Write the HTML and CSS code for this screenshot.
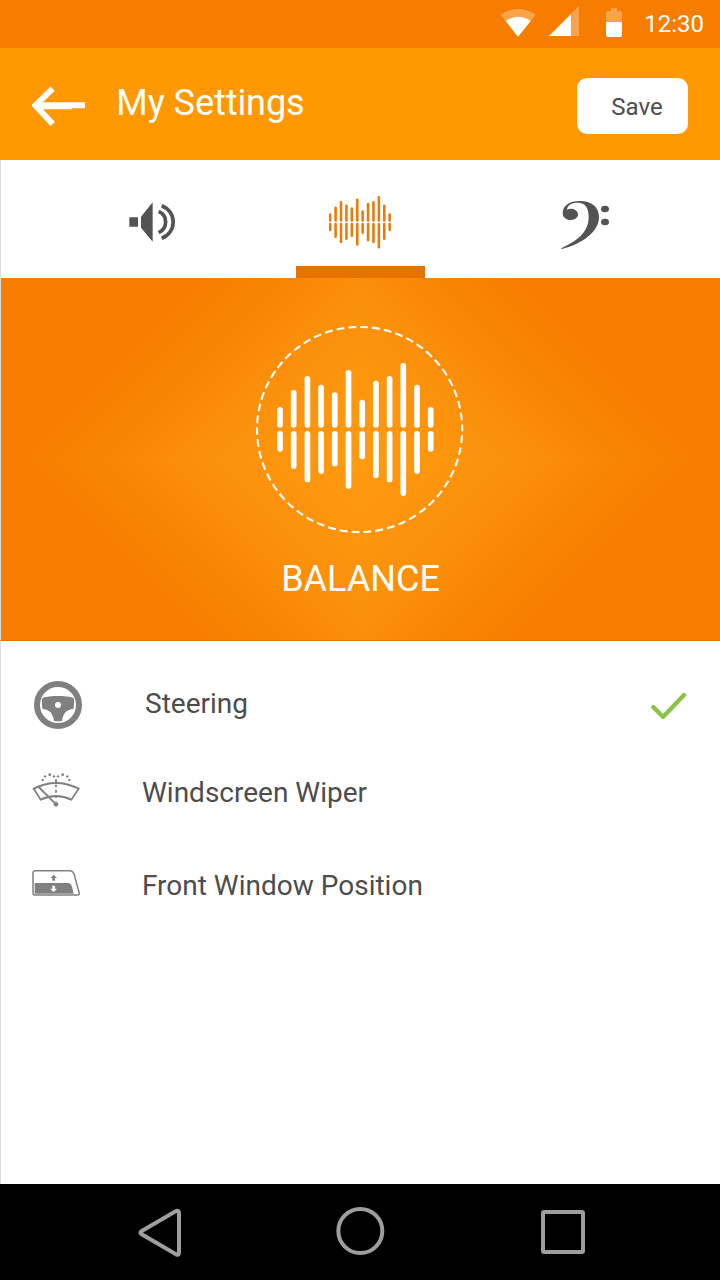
FILE: index.html
```html
<!DOCTYPE html>
<html lang="en">
<head>
  <meta charset="UTF-8" />
  <title>My Settings</title>
  <link rel="stylesheet" href="styles.css">
</head>
<body>
  <!-- shared by the tab and the panel -->
  <svg class="defs">
    <symbol id="bars" viewBox="0 0 157 133">
      <path d="M3 46.8V61.8M16.7 29.8V61.8M30.4 15.8V61.8M44.1 24.6V61.8M57.8 32V61.8M71.5 9.8V61.8M85.2 39.5V61.8M98.9 20.5V61.8M112.6 15.8V61.8M126.3 2.8V61.8M140 24.6V61.8M153.7 46.8V61.8" />
      <path d="M3 70.8V85.8M16.7 70.8V103M30.4 70.8V116.5M44.1 70.8V108M57.8 70.8V100.5M71.5 70.8V123M85.2 70.8V93.3M98.9 70.8V112.2M112.6 70.8V116.5M126.3 70.8V130.2M140 70.8V108M153.7 70.8V85.8" />
    </symbol>
  </svg>

  <div class="screen">
    <div class="status">
      <svg class="wifi" viewBox="60 24 108 88">
        <path fill="#fff" fill-opacity=".3" d="M62 44Q114 10 167 44L114 110Z" />
        <path fill="#fff" d="M77 63Q114 38 152 63L114 110Z" />
      </svg>
      <svg class="signal" viewBox="207 18 90 90">
        <path fill="#fff" fill-opacity=".3" d="M297 18V108H273V42Z" />
        <path fill="#fff" d="M207 108L273 42V108Z" />
      </svg>
      <svg class="battery" viewBox="378 24 48 87">
        <path fill="#fff" fill-opacity=".3" d="M393 24H411V33H421Q426 33 426 38V66H378V38Q378 33 383 33H393Z" />
        <path fill="#fff" d="M378 66H426V105Q426 111 420 111H384Q378 111 378 105Z" />
      </svg>
      <span class="time">12:30</span>
    </div>

    <header class="header">
      <svg class="back" viewBox="96 76 160 122">
        <path d="M158 84L106 134L158 190" fill="none" stroke="#fff" stroke-width="18" />
        <path d="M96 134L110 121L110 147Z" fill="#fff" />
        <path d="M108 125H255V143H216V146H108Z" fill="#fff" />
      </svg>
      <h1>My Settings</h1>
      <button class="save">Save</button>
    </header>

    <nav class="tabs">
      <div class="tab volume">
        <svg width="48" height="42" viewBox="56 48 144 126">
          <path fill="#535353" d="M57 97H83V125H57ZM92 95L127 52V170L92 128Z" />
          <path fill="none" stroke="#535353" stroke-width="11" d="M145 79A35 35 0 0 1 145 143M154 62A52 52 0 0 1 154 160" />
        </svg>
      </div>
      <div class="tab active">
        <svg class="bars-small"><use href="#bars" /></svg>
      </div>
      <div class="tab bass">
        <svg width="50" height="50" viewBox="45 45 150 150">
          <path fill="#535353" d="M48 190C96 168 131 142 131 96C131 68 121 53 98 53C80 53 67 60 66 74C82 66 99 76 99 88C99 98 90 105 78 105C63 105 53 97 53 84C53 62 74 48 104 48C140 48 162 66 162 96C162 140 112 177 50 192Z" />
          <ellipse cx="180" cy="72" rx="12" ry="10" fill="#535353" />
          <ellipse cx="180" cy="111" rx="12" ry="10" fill="#535353" />
        </svg>
      </div>
    </nav>

    <section class="panel">
      <div class="dial">
        <svg class="ring" viewBox="0 0 208 208">
          <circle cx="103.6" cy="103.5" r="102.6" />
        </svg>
        <svg class="bars-large"><use href="#bars" /></svg>
      </div>
      <h2>BALANCE</h2>
    </section>

    <ul class="list">
      <li class="row steering">
        <svg width="48" height="48" viewBox="102 63 144 144">
          <circle cx="174" cy="135" r="63" fill="none" stroke="#808080" stroke-width="18" />
          <path fill="#808080" d="M127 114C150 106 198 106 221 114C223 125 223 138 220 147C201 149 189 158 186 183Q174 185 162 183C159 158 147 149 128 147C125 138 125 125 127 114Z" />
          <circle cx="174" cy="135" r="9" fill="#fff" />
        </svg>
        <span>Steering</span>
        <svg class="check" width="36" height="28" viewBox="63 66 108 84">
          <path d="M70 111L99 141L162 75" />
        </svg>
      </li>
      <li class="row wiper">
        <svg width="48" height="36" viewBox="96 52 144 108">
          <g fill="none" stroke="#808080" stroke-width="5.5">
            <path d="M101 102Q168 68 236 102L214 135Q168 113 122 135Z" />
            <path d="M116 97L168 149" />
            <path d="M168 74V140" stroke-dasharray="8 8" />
          </g>
          <circle cx="168" cy="149" r="7" fill="#808080" />
          <g fill="#808080">
            <circle cx="128" cy="76" r="3.5" /><circle cx="135" cy="65" r="3.5" />
            <circle cx="149" cy="60" r="4" /><circle cx="162" cy="65" r="3.5" />
            <circle cx="174" cy="65" r="3.5" /><circle cx="188" cy="60" r="4" />
            <circle cx="202" cy="65" r="3.5" /><circle cx="208" cy="76" r="3.5" />
          </g>
        </svg>
        <span>Windscreen Wiper</span>
      </li>
      <li class="row window">
        <svg width="48" height="28" viewBox="96 343 144 84">
          <path fill="none" stroke="#808080" stroke-width="4.5" d="M106 348H208Q219 348 222 358L238 416Q239 421 233 421H106Q99 421 99 414V355Q99 348 106 348Z" />
          <path fill="#808080" d="M104 385H203Q213 386 216 396L221 417H104Z" />
          <path fill="#808080" d="M161 360L171 370H165V378H157V370H151Z" />
          <path fill="#fff" d="M161 412L171 402H165V393H157V402H151Z" />
        </svg>
        <span>Front Window Position</span>
      </li>
    </ul>

    <footer class="navbar">
      <svg viewBox="84 111 132 150" width="44" height="50">
        <path d="M94 184L198 123Q207 120 207 129V247Q207 257 198 253L94 192Q89 188 94 184Z" />
      </svg>
      <svg class="home" viewBox="676 111 148 144" width="49.33" height="48">
        <circle cx="749" cy="183" r="66" />
      </svg>
      <svg class="recent" viewBox="0 0 44 44" width="44" height="44">
        <rect x="2" y="2" width="40" height="40" rx="1" />
      </svg>
    </footer>
  </div>
</body>
</html>
```
FILE: styles.css
```css
* { box-sizing: border-box; }
body { margin: 0; font-family: Roboto, sans-serif; color: #4d4d4d; background: #fff; }
h1, h2, ul { margin: 0; padding: 0; font-weight: 400; }
svg { display: block; flex: none; }
.defs { display: none; }
.screen { width: 720px; height: 1280px; display: flex; flex-direction: column; overflow: hidden; }

.status { height: 48px; flex: none; display: flex; align-items: flex-start; justify-content: flex-end; padding-right: 16px; background: #f77d00; color: #fff; }
.wifi { width: 36px; height: 29.33px; margin: 8px 13px 0 0; }
.signal { width: 30px; height: 30px; margin: 6px 27px 0 0; }
.battery { width: 16px; height: 29px; margin: 8px 22px 0 0; }
.time { font-size: 24px; line-height: 28px; margin-top: 10px; }

.header { height: 112px; flex: none; display: flex; align-items: center; padding: 4px 32px 0; background: #ff9803; color: #fff; }
.back { width: 53.33px; height: 40.67px; }
.header h1 { font-size: 36px; line-height: 42px; letter-spacing: -.05px; margin: 0 auto 7px 31px; }
.save { width: 111px; height: 56px; padding: 2px 0 0 9px; border: 0; border-radius: 10px; background: #fff; color: #4d4d4d; font: 24px Roboto, sans-serif; }

.tabs { height: 118px; flex: none; display: grid; grid-template-columns: 295px 129px 1fr; border-left: 1px solid #dcdcdc; }
.tab { display: flex; justify-content: center; align-items: flex-start; }
.volume { padding: 41px 0 0 9px; }
.active { padding: 36px 1px 0 0; border-bottom: 12px solid #e67300; }
.bass { padding: 40px 0 0 25px; }
.bars-small { width: 62px; height: 52.5px; stroke: #e87a0a; stroke-width: 6.5; }

.panel {
  --glow: #ff9b10, #fb8f0a 125px, #f98504 180px, #f77d00 245px;
  height: 363px; flex: none; display: flex; flex-direction: column; align-items: center; padding-top: 48px;
  border-left: 1px solid #dcdcdc; border-bottom: 1px solid #e67300; color: #fff;
  /* diamond glow, one quadrant each */
  background:
    linear-gradient(-45deg, var(--glow)) 0 0 / 359px 181px no-repeat,
    linear-gradient(45deg, var(--glow)) 100% 0 / 360px 181px no-repeat,
    linear-gradient(-135deg, var(--glow)) 0 100% / 359px 181px no-repeat,
    linear-gradient(135deg, var(--glow)) 100% 100% / 360px 181px no-repeat;
}
.dial { width: 208px; height: 208px; margin-right: 2px; display: grid; place-items: center; }
.dial svg { grid-area: 1 / 1; }
.ring { width: 208px; height: 208px; fill: none; stroke: #fff; stroke-width: 2.1; stroke-dasharray: 7.8 4.14; stroke-dashoffset: 6; }
.bars-large { width: 157px; height: 133px; margin: 0 8px 1px 0; stroke: #fff; stroke-width: 5.7; }
#bars { stroke-linecap: round; }
.panel h2 { font-size: 36px; line-height: 42px; margin-top: 24px; }

.list { flex: 1; list-style: none; border-left: 1px solid #dcdcdc; padding: 18px 33px 0 31px; }
.row { display: flex; align-items: center; font-size: 28px; line-height: 32px; }
.row span { margin-left: 62px; }
.steering { height: 92px; padding-left: 2px; }
.steering span { margin: 0 0 2px 63px; }
.wiper { height: 84px; }
.window { height: 102px; }
.wiper svg, .window svg { margin-bottom: 6px; }
.check { margin: 2px 0 0 auto; fill: none; stroke: #8bc34a; stroke-width: 13; stroke-linecap: round; stroke-linejoin: round; }

.navbar { height: 96px; flex: none; display: flex; align-items: flex-start; padding: 23px 0 0 138px; background: #000; }
.navbar svg { fill: none; stroke: #9e9e9e; stroke-width: 12; }
.navbar .home { margin-left: 153.5px; }
.navbar .recent { margin: 3px 0 0 156.2px; stroke-width: 4; }
```
